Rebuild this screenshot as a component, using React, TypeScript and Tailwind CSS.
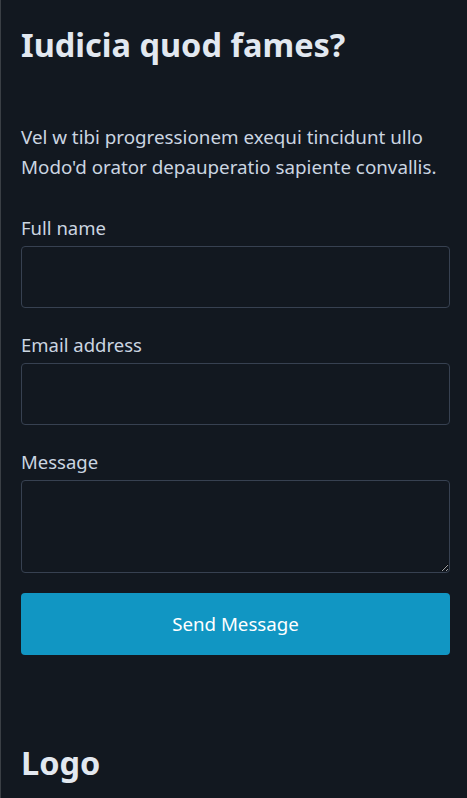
import React from 'react';

const FONT = { fontFamily: '"Noto Sans", "Open Sans", sans-serif' };

function Field({ label, multiline }: { label: string; multiline?: boolean }) {
  return (
    <div className="flex flex-col">
      <label className="text-[18.5px] leading-[26px] text-[#cbd5e1] mb-[5px]">{label}</label>
      {multiline ? (
        <textarea className="h-[93px] w-full rounded-[4px] border border-[#374151] bg-[#121820] resize-y outline-none" />
      ) : (
        <input className="h-[62px] w-full rounded-[4px] border border-[#374151] bg-[#121820] outline-none" />
      )}
    </div>
  );
}

export default function App() {
  return (
    <div className="min-h-screen bg-[#121820] border-l border-[#3a3f45]" style={FONT}>
      <section className="pl-[20px] pr-[17px] pt-[23px]">
        <h2 className="text-[32.5px] leading-[44px] font-bold text-[#e2e8f0]">Iudicia quod fames?</h2>
        <p className="mt-[55px] text-[18.8px] leading-[30px] text-[#cbd5e1]">
          Vel w tibi progressionem exequi tincidunt ullo Modo'd orator depauperatio sapiente convallis.
        </p>

        <form className="mt-[33px] flex flex-col gap-[24px]" onSubmit={e => e.preventDefault()}>
          <Field label="Full name" />
          <Field label="Email address" />
          <Field label="Message" multiline />
          <button type="submit"
            className="h-[62px] w-full rounded-[4px] bg-[#1196c3] text-white text-[18.7px] -mt-[4px]">
            Send Message
          </button>
        </form>
      </section>

      <footer className="pl-[20px] pr-[17px] pt-[86px] pb-10">
        <div className="text-[32.5px] leading-[44px] font-bold text-[#e2e8f0]">Logo</div>
      </footer>
    </div>
  );
}
